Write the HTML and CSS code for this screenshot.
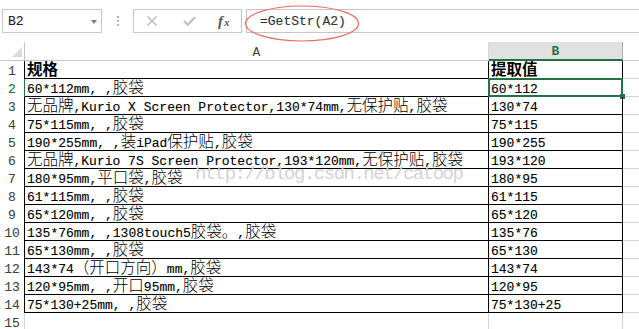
FILE: index.html
```html
<!DOCTYPE html>
<html lang="zh-CN">
<head>
<meta charset="utf-8">
<title>GetStr</title>
<link rel="stylesheet" href="styles.css">
</head>
<body>
<div class="toolbar">
  <div class="namebox"><span>B2</span><span class="caret"></span></div>
  <div class="grip"><i></i><i></i><i></i></div>
  <div class="btns">
    <svg class="ic-x" width="10" height="10" viewBox="0 0 10 10"><path d="M0.5 0.5 L9.5 9.5 M9.5 0.5 L0.5 9.5" stroke="#bdbdbd" stroke-width="1.5" fill="none"/></svg>
    <svg class="ic-ok" width="13" height="10" viewBox="0 0 13 10"><path d="M1 5 L4.8 8.8 L12 1.2" stroke="#bdbdbd" stroke-width="2" fill="none"/></svg>
    <span class="fx">f<span class="fxx">x</span></span>
  </div>
  <div class="fbox">=GetStr(A2)
    <svg class="ring" width="118" height="40" viewBox="0 0 118 40"><ellipse cx="58" cy="18.5" rx="56.5" ry="17.5" fill="none" stroke="#ef6b6b" stroke-width="1.2"/></svg>
  </div>
</div>

<div class="sheet">
  <div class="corner"><span class="tri"></span></div>
  <div class="ch">A</div>
  <div class="ch chs">B</div>
  <div class="ch chc"></div>

  <div class="rn">1</div>
  <div class="cell"><b><span class="z">规格</span></b></div>
  <div class="cell"><b><span class="z">提取值</span></b></div>
  <div class="gc"></div>

  <div class="rn rns">2</div>
  <div class="cell">60*112mm, ,<span class="z">胶袋</span></div>
  <div class="cell sel-cell">60*112<span class="sel"></span><span class="handle"></span></div>
  <div class="gc"></div>

  <div class="rn">3</div>
  <div class="cell"><span class="z">无品牌</span>,Kurio X Screen Protector,130*74mm,<span class="z">无保护贴</span>,<span class="z">胶袋</span></div>
  <div class="cell">130*74</div>
  <div class="gc"></div>

  <div class="rn">4</div>
  <div class="cell">75*115mm, ,<span class="z">胶袋</span></div>
  <div class="cell">75*115</div>
  <div class="gc"></div>

  <div class="rn">5</div>
  <div class="cell">190*255mm, ,<span class="z">装</span>iPad<span class="z">保护贴</span>,<span class="z">胶袋</span></div>
  <div class="cell">190*255</div>
  <div class="gc"></div>

  <div class="rn">6</div>
  <div class="cell"><span class="z">无品牌</span>,Kurio 7S Screen Protector,193*120mm,<span class="z">无保护贴</span>,<span class="z">胶袋</span></div>
  <div class="cell">193*120</div>
  <div class="gc"></div>

  <div class="rn">7</div>
  <div class="cell">180*95mm,<span class="z">平口袋</span>,<span class="z">胶袋</span></div>
  <div class="cell">180*95</div>
  <div class="gc"></div>

  <div class="rn">8</div>
  <div class="cell">61*115mm, ,<span class="z">胶袋</span></div>
  <div class="cell">61*115</div>
  <div class="gc"></div>

  <div class="rn">9</div>
  <div class="cell">65*120mm, ,<span class="z">胶袋</span></div>
  <div class="cell">65*120</div>
  <div class="gc"></div>

  <div class="rn">10</div>
  <div class="cell">135*76mm, ,1308touch5<span class="z">胶袋。</span>,<span class="z">胶袋</span></div>
  <div class="cell">135*76</div>
  <div class="gc"></div>

  <div class="rn">11</div>
  <div class="cell">65*130mm, ,<span class="z">胶袋</span></div>
  <div class="cell">65*130</div>
  <div class="gc"></div>

  <div class="rn">12</div>
  <div class="cell">143*74<span class="z">（开口方向）</span>mm,<span class="z">胶袋</span></div>
  <div class="cell">143*74</div>
  <div class="gc"></div>

  <div class="rn">13</div>
  <div class="cell">120*95mm, ,<span class="z">开口</span>95mm,<span class="z">胶袋</span></div>
  <div class="cell">120*95</div>
  <div class="gc"></div>

  <div class="rn">14</div>
  <div class="cell">75*130+25mm, ,<span class="z">胶袋</span></div>
  <div class="cell">75*130+25</div>
  <div class="gc"></div>

  <div class="rn rnl">15</div>
  <div class="cell cl"></div>
  <div class="cell cl"></div>
  <div class="gc"></div>

  <div class="wm">http://blog.csdn.net/catoop</div>
</div>
</body>
</html>
```

FILE: styles.css
```css
html, body {
  margin: 0;
  padding: 0;
  background: #ffffff;
}
body {
  width: 639px;
  height: 329px;
  overflow: hidden;
  font-family: "Liberation Mono", "Noto Sans CJK SC", monospace;
  font-size: 13px;
  color: #000;
}

/* ---------- formula bar ---------- */
.toolbar {
  display: flex;
  height: 24px;
  padding-top: 9px;
}
.namebox {
  margin-left: 2px;
  width: 100px;
  box-sizing: border-box;
  border: 1px solid #c6c6c6;
  display: flex;
  align-items: center;
  justify-content: space-between;
  padding: 0 4px 0 5px;
  color: #222;
  font-size: 13px;
  -webkit-text-stroke: 0.12px #222;
}
.caret {
  width: 0;
  height: 0;
  border-left: 3px solid transparent;
  border-right: 3px solid transparent;
  border-top: 4px solid #7a7a7a;
  margin-top: 1px;
}
.grip {
  margin-left: 15px;
  display: flex;
  flex-direction: column;
  justify-content: center;
  gap: 2px;
}
.grip i {
  display: block;
  width: 2px;
  height: 2px;
  background: #b4b4b4;
}
.btns {
  margin-left: 14px;
  width: 109px;
  box-sizing: border-box;
  border: 1px solid #c6c6c6;
  display: flex;
  align-items: center;
  padding-left: 13px;
}
.ic-x { display: block; }
.ic-ok { display: block; margin-left: 26px; }
.fx {
  margin-left: 22px;
  font-family: "Liberation Serif", serif;
  font-style: italic;
  font-weight: bold;
  font-size: 15px;
  color: #555;
  line-height: 1;
}
.fxx {
  font-size: 11px;
  margin-left: 1px;
}
.fbox {
  position: relative;
  margin-left: 4px;
  flex: 1;
  border-top: 1px solid #c6c6c6;
  border-bottom: 1px solid #c6c6c6;
  border-left: 1px solid #c6c6c6;
  display: flex;
  align-items: center;
  padding-left: 13px;
  color: #333;
  font-size: 13px;
  -webkit-text-stroke: 0.12px #333;
}
.ring {
  position: absolute;
  left: -3px;
  top: -5px;
}

/* ---------- sheet ---------- */
.sheet {
  position: relative;
  margin-top: 9px;
  display: grid;
  grid-template-columns: 25px 464px 134px 16px;
  grid-template-rows: 19px repeat(15, 18px);
}
.corner {
  box-sizing: border-box;
  border-right: 1px solid #c6c6c6;
  border-bottom: 1px solid #c6c6c6;
  position: relative;
}
.tri {
  position: absolute;
  right: 2px;
  bottom: 3px;
  width: 0;
  height: 0;
  border-left: 10px solid transparent;
  border-bottom: 10px solid #dcdcdc;
}
.ch {
  box-sizing: border-box;
  border-right: 1px solid #dadada;
  border-bottom: 1px solid #c6c6c6;
  text-align: center;
  padding-top: 2px;
  line-height: 17px;
  color: #444;
  font-size: 13px;
}
.chs {
  background: #e1e1e1;
  border-right: 1px solid #ababab;
  border-bottom: 2px solid #217346;
  color: #217346;
  font-weight: bold;
  line-height: 16px;
}
.chc {
  border-right: none;
}
.rn {
  box-sizing: border-box;
  border-right: 1px solid #000;
  text-align: center;
  color: #444;
  padding-top: 2px;
  line-height: 17px;
  -webkit-text-stroke: 0.1px #444;
}
.rns {
  color: #217346;
  border-right-color: #217346;
  -webkit-text-stroke: 0.2px #217346;
}
.rnl {
  border-right-color: #d4d4d4;
}
.cell {
  position: relative;
  box-sizing: border-box;
  border-right: 1px solid #000;
  border-bottom: 1px solid #000;
  padding: 2px 0 0 2px;
  line-height: 17px;
  white-space: nowrap;
  -webkit-text-stroke: 0.12px #000;
}
.cl {
  border-right-color: #d4d4d4;
  border-bottom: none;
}
.gc {
  box-sizing: border-box;
  border-bottom: 1px solid #d4d4d4;
}
.z {
  font-family: "Noto Sans CJK SC", sans-serif;
  font-size: 15.5px;
  font-weight: 300;
  line-height: 0;
  -webkit-text-stroke: 0;
}
b .z {
  font-weight: bold;
}
.sel {
  position: absolute;
  left: -1px;
  top: -1px;
  right: -1px;
  bottom: -1px;
  border: 2px solid #217346;
}
.handle {
  position: absolute;
  left: 131px;
  top: 15px;
  width: 5px;
  height: 5px;
  background: #217346;
}
.wm {
  position: absolute;
  left: 195px;
  top: 123px;
  font-size: 19px;
  line-height: 19px;
  letter-spacing: -1.5px;
  color: #d4d4d4;
  white-space: nowrap;
  -webkit-text-stroke: 0;
}
```
